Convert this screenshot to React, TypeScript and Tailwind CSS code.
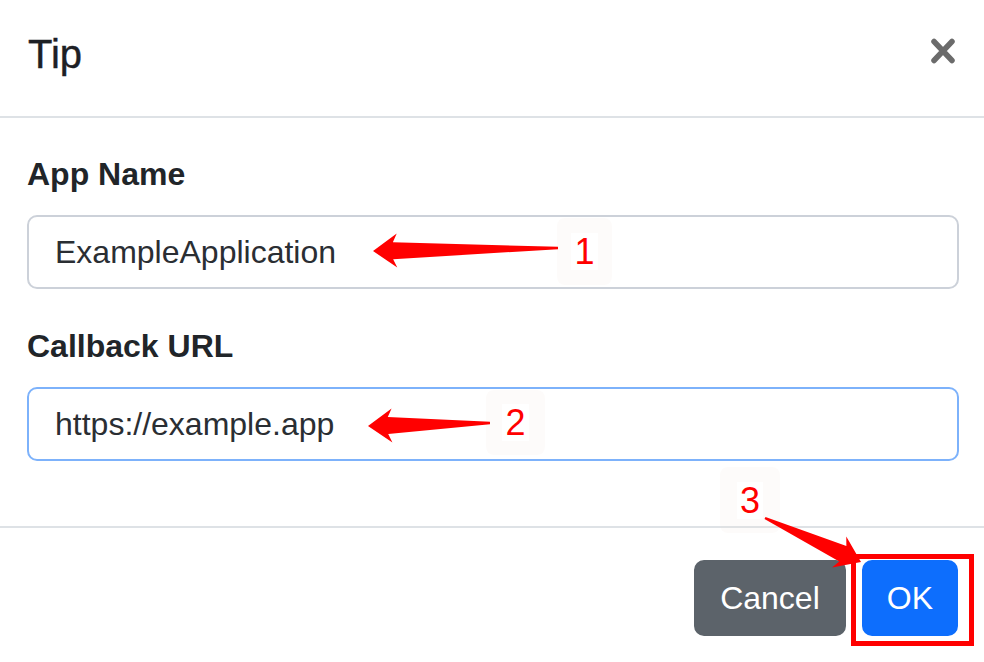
import React from "react"

type Pt = [number, number]

// builds a tapered annotation arrow (thin tail, wide head) as polygon points
function arrowPoints(tail: Pt, tip: Pt) {
  const dx = tip[0] - tail[0]
  const dy = tip[1] - tail[1]
  const len = Math.hypot(dx, dy)
  const u: Pt = [dx / len, dy / len]
  const n: Pt = [-u[1], u[0]]
  const headLen = 24
  const headHalf = 17
  const neckHalf = 8.5
  const tailHalf = 1.2
  const at = (base: Pt, back: number, side: number): string =>
    `${base[0] - u[0] * back + n[0] * side},${base[1] - u[1] * back + n[1] * side}`
  return [
    at(tip, 0, 0),
    at(tip, headLen, headHalf),
    at(tip, headLen - 4, neckHalf),
    at(tail, 0, tailHalf),
    at(tail, 0, -tailHalf),
    at(tip, headLen - 4, -neckHalf),
    at(tip, headLen, -headHalf),
  ].join(" ")
}

const Marker = ({ n, className }: { n: string; className: string }) => {
  return (
    <div className={`absolute flex items-center justify-center rounded-[8px] bg-[#e8dccf]/10 ${className}`}>
      <span className="bg-white px-[3px] text-[36px] leading-[37px] text-[#ff0000]">{n}</span>
    </div>
  )
}

const Field = ({ label, value, focused }: { label: string; value: string; focused?: boolean }) => {
  return (
    <div className="flex flex-col">
      <label className="text-[32px] leading-[48px] font-bold text-[#212529] mb-[17px]">{label}</label>
      <div
        className={`h-[74px] flex items-center rounded-[10px] border-2 bg-white px-[26px] text-[32px] text-[#2a2e33] ${
          focused ? "border-[#7db2fb]" : "border-[#ccd1d9]"
        }`}
      >
        {value}
      </div>
    </div>
  )
}

export default function App() {
  return (
    <div className="relative w-[984px] h-[662px] overflow-hidden bg-white font-['Liberation_Sans',Arial,sans-serif]">
      {/* header */}
      <div className="h-[118px] flex items-start justify-between pl-[28px] pr-[29px] pt-[30px] border-b-2 border-[#dee2e6]">
        <h5 className="text-[40px] leading-[48px] text-[#1d2024] [-webkit-text-stroke:0.4px_#1d2024]">Tip</h5>
        <svg width="24" height="26" viewBox="0 0 24 26" className="mt-[8px]">
          <path d="M3 3.5 L21 22.5 M21 3.5 L3 22.5" stroke="#6b6b6b" strokeWidth="5.5" strokeLinecap="round" />
        </svg>
      </div>

      {/* body */}
      <div className="flex flex-col gap-[33px] pl-[27px] pr-[25px] pt-[32px] pb-[65px]">
        <Field label="App Name" value="ExampleApplication" />
        <Field label="Callback URL" value="https://example.app" focused />
      </div>

      {/* footer */}
      <div className="flex justify-end gap-[16px] border-t-2 border-[#dee2e6] pt-[32px] pr-[26px]">
        <button className="h-[76px] rounded-[10px] border-2 border-[#5c636a] bg-[#5c636a] px-[24px] text-[32px] text-white">
          Cancel
        </button>
        <button className="h-[76px] rounded-[10px] border-2 border-[#0d6efd] bg-[#0d6efd] px-[23px] text-[32px] text-white">
          OK
        </button>
      </div>

      {/* annotations */}
      <Marker n="1" className="left-[557px] top-[218px] w-[55px] h-[67px]" />
      <Marker n="2" className="left-[486px] top-[390px] w-[59px] h-[65px]" />
      <Marker n="3" className="left-[720px] top-[467px] w-[60px] h-[66px]" />
      <div className="absolute left-[851px] top-[554px] w-[123px] h-[92px] border-[5px] border-[#ff0000]" />
      <svg className="absolute left-0 top-0 pointer-events-none" width="984" height="662">
        <polygon points={arrowPoints([558, 248], [373, 251])} fill="#ff0000" />
        <polygon points={arrowPoints([490, 423], [368, 426])} fill="#ff0000" />
        <polygon points={arrowPoints([765, 518], [861, 562])} fill="#ff0000" />
      </svg>
    </div>
  )
}
